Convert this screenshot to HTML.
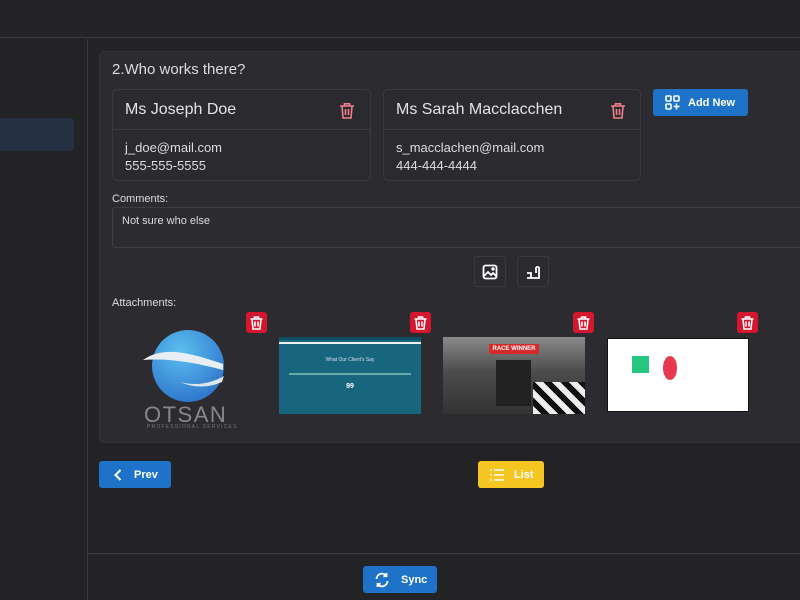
<!DOCTYPE html>
<html><head><meta charset="utf-8"><style>
*{box-sizing:border-box;margin:0;padding:0}
body{width:800px;height:600px;overflow:hidden;background:#232225;font-family:"Liberation Sans",Arial,sans-serif;color:#e6e6e6;position:relative}
.abs{position:absolute}
.topbar{left:0;top:0;width:800px;height:38px;background:#232225;border-bottom:1px solid #3a393d}
.vline{left:87px;top:39px;width:1px;height:561px;background:#3a393d}
.side{left:0;top:118px;width:74px;height:33px;background:#253142;border-radius:0 3px 3px 0}
.panel{left:99px;top:51px;width:710px;height:392px;background:#2c2b2f;border:1px solid #353438;border-radius:5px}
.card{top:89px;height:92px;border:1px solid #3b3a3e;border-radius:6px;background:#2b2a2e}
.card .hd{height:40px;border-bottom:1px solid #3b3a3e;padding:11px 0 0 12px;font-size:16px;color:#e4e4e4}
.card .bd{padding:9px 12px;font-size:13px;line-height:18px;color:#ddd}
.trash{position:absolute}
.btn{border-radius:3px;color:#fff;font-weight:bold;font-size:11px;display:flex;align-items:center}
.rt{width:21px;height:21px;background:#d4162f;border-radius:3px;display:flex;align-items:center;justify-content:center}
</style></head><body>
<div class="abs topbar"></div>
<div class="abs vline"></div>
<div class="abs side"></div>
<div class="abs panel"></div>
<div class="abs" style="left:112px;top:61px;font-size:15px;color:#ddd">2.Who works there?</div>

<div class="abs card" style="left:112px;width:259px"><div class="hd">Ms Joseph Doe</div><div class="bd">j_doe@mail.com<br>555-555-5555</div>
<svg class="trash" style="left:226px;top:12px" width="16" height="17" viewBox="0 0 16 17" fill="none" stroke="#ef7f8a" stroke-width="1.6"><path d="M1 4h14M5.5 4V1.8h5V4M3 4l1 12h8l1-12M6.5 7v6M9.5 7v6"/></svg></div>
<div class="abs card" style="left:383px;width:258px"><div class="hd">Ms Sarah Macclacchen</div><div class="bd">s_macclachen@mail.com<br>444-444-4444</div>
<svg class="trash" style="left:226px;top:12px" width="16" height="17" viewBox="0 0 16 17" fill="none" stroke="#ef7f8a" stroke-width="1.6"><path d="M1 4h14M5.5 4V1.8h5V4M3 4l1 12h8l1-12M6.5 7v6M9.5 7v6"/></svg></div>

<div class="abs btn" style="left:653px;top:89px;width:95px;height:27px;background:#1e73c8;padding-left:12px">
<svg width="15" height="15" viewBox="0 0 15 15" fill="none" stroke="#fff" stroke-width="1.6"><rect x="1" y="1" width="5" height="5" rx="1"/><rect x="9" y="1" width="5" height="5" rx="1"/><rect x="1" y="9" width="5" height="5" rx="1"/><path d="M11.5 8.5v6M8.5 11.5h6"/></svg>
<span style="margin-left:8px">Add New</span></div>

<div class="abs" style="left:112px;top:193px;font-size:11px;color:#ddd">Comments:</div>
<div class="abs" style="left:112px;top:207px;width:700px;height:41px;border:1px solid #3e3d41;border-radius:3px;padding:7px 9px;font-size:11px;color:#ddd">Not sure who else</div>

<div class="abs" style="left:474px;top:256px;width:32px;height:31px;border:1px solid #3a393d;border-radius:3px;display:flex;align-items:center;justify-content:center"><svg width="16" height="16" viewBox="0 0 16 16" fill="none" stroke="#fff" stroke-width="1.8"><rect x="1.5" y="1.5" width="13" height="13" rx="2"/><path d="M2 12l4-4 3 3 2-2 3 3"/><circle cx="11" cy="5" r="0.8" fill="#fff"/></svg></div>
<div class="abs" style="left:517px;top:256px;width:32px;height:31px;border:1px solid #3a393d;border-radius:3px;display:flex;align-items:center;justify-content:center"><svg width="16" height="16" viewBox="0 0 16 16" fill="none" stroke="#fff" stroke-width="1.8"><path d="M2 9h4v5H2M6 14h8V3M11 3h3M11 3v6"/></svg></div>

<div class="abs" style="left:112px;top:297px;font-size:11px;color:#ddd">Attachments:</div>

<div class="abs" style="left:140px;top:330px;width:90px;height:80px">
<svg width="90" height="80" viewBox="0 0 90 80"><defs><radialGradient id="g" cx="0.4" cy="0.3" r="0.8"><stop offset="0" stop-color="#5cc0f0"/><stop offset="1" stop-color="#2a6ec8"/></radialGradient></defs>
<circle cx="48" cy="36" r="36" fill="url(#g)"/><path d="M3 30c20-14 45-8 80 4v6c-30-8-55-12-80-10z" fill="#e8eef4"/><path d="M40 52c15 4 30 2 44-6l-2 6c-14 6-28 6-42 0z" fill="#dde6ee"/></svg>
</div>
<div class="abs" style="left:144px;top:402px;font-size:22px;letter-spacing:1.5px;color:#888">OTSAN</div>
<div class="abs" style="left:147px;top:424px;font-size:5px;letter-spacing:1.2px;color:#777">PROFESSIONAL SERVICES</div>

<div class="abs" style="left:279px;top:337px;width:142px;height:77px;background:#17667e;border-top:3px solid #0e4f63">
<div style="height:2px;background:#eee;margin-top:2px"></div>
<div style="text-align:center;font-size:5px;color:#dde;margin-top:13px">What Our Client's Say</div>
<div style="margin:10px 10px 0;height:2px;background:#6aa"></div>
<div style="text-align:center;font-size:7px;color:#fff;margin-top:8px;font-weight:bold">99</div></div>

<div class="abs" style="left:443px;top:337px;width:142px;height:77px;background:linear-gradient(#8a8a8a,#4c4c4c 45%,#333)">
<div style="position:absolute;left:46px;top:7px;width:50px;height:10px;background:#d42a2a;font-size:6px;font-weight:bold;color:#fff;text-align:center;line-height:10px">RACE WINNER</div>
<div style="position:absolute;left:53px;top:23px;width:35px;height:46px;background:#222"></div>
<div style="position:absolute;left:90px;top:45px;width:52px;height:32px;background:repeating-linear-gradient(45deg,#eee 0 6px,#111 6px 12px)"></div></div>

<div class="abs" style="left:607px;top:338px;width:142px;height:74px;background:#fff;border:1px solid #111">
<div style="position:absolute;left:24px;top:17px;width:17px;height:17px;background:#27c780"></div>
<div style="position:absolute;left:55px;top:17px;width:14px;height:24px;border-radius:50%;background:#e8384f"></div></div>

<div class="abs rt" style="left:246px;top:312px"><svg width="13" height="14" viewBox="0 0 13 14" fill="none" stroke="#fff" stroke-width="1.6"><path d="M0.5 3h12M4.5 3V1h4v2M2 3l1 10h7l1-10M5 5.5v5M8 5.5v5"/></svg></div>
<div class="abs rt" style="left:410px;top:312px"><svg width="13" height="14" viewBox="0 0 13 14" fill="none" stroke="#fff" stroke-width="1.6"><path d="M0.5 3h12M4.5 3V1h4v2M2 3l1 10h7l1-10M5 5.5v5M8 5.5v5"/></svg></div>
<div class="abs rt" style="left:573px;top:312px"><svg width="13" height="14" viewBox="0 0 13 14" fill="none" stroke="#fff" stroke-width="1.6"><path d="M0.5 3h12M4.5 3V1h4v2M2 3l1 10h7l1-10M5 5.5v5M8 5.5v5"/></svg></div>
<div class="abs rt" style="left:737px;top:312px"><svg width="13" height="14" viewBox="0 0 13 14" fill="none" stroke="#fff" stroke-width="1.6"><path d="M0.5 3h12M4.5 3V1h4v2M2 3l1 10h7l1-10M5 5.5v5M8 5.5v5"/></svg></div>

<div class="abs btn" style="left:99px;top:461px;width:72px;height:27px;background:#1e73c8;padding-left:15px">
<svg width="8" height="12" viewBox="0 0 8 12" fill="none" stroke="#fff" stroke-width="2"><path d="M6.5 1L1.5 6l5 5"/></svg><span style="margin-left:12px">Prev</span></div>
<div class="abs btn" style="left:478px;top:461px;width:66px;height:27px;background:#f5c622;padding-left:12px">
<svg width="14" height="12" viewBox="0 0 14 12" fill="none" stroke="#fff" stroke-width="1.6"><path d="M0 1h1.5M0 6h1.5M0 11h1.5M4 1h10M4 6h10M4 11h10"/></svg><span style="margin-left:10px">List</span></div>

<div class="abs" style="left:88px;top:553px;width:712px;height:1px;background:#3a393d"></div>
<div class="abs btn" style="left:363px;top:566px;width:74px;height:27px;background:#1e73c8;padding-left:11px">
<svg width="16" height="16" viewBox="0 0 16 16" fill="none" stroke="#fff" stroke-width="1.8"><path d="M2.5 7a5.5 5.5 0 0 1 10-3M13.5 9a5.5 5.5 0 0 1-10 3M12.5 1v3.2H9.3M3.5 15v-3.2h3.2"/></svg><span style="margin-left:11px">Sync</span></div>
</body></html>
